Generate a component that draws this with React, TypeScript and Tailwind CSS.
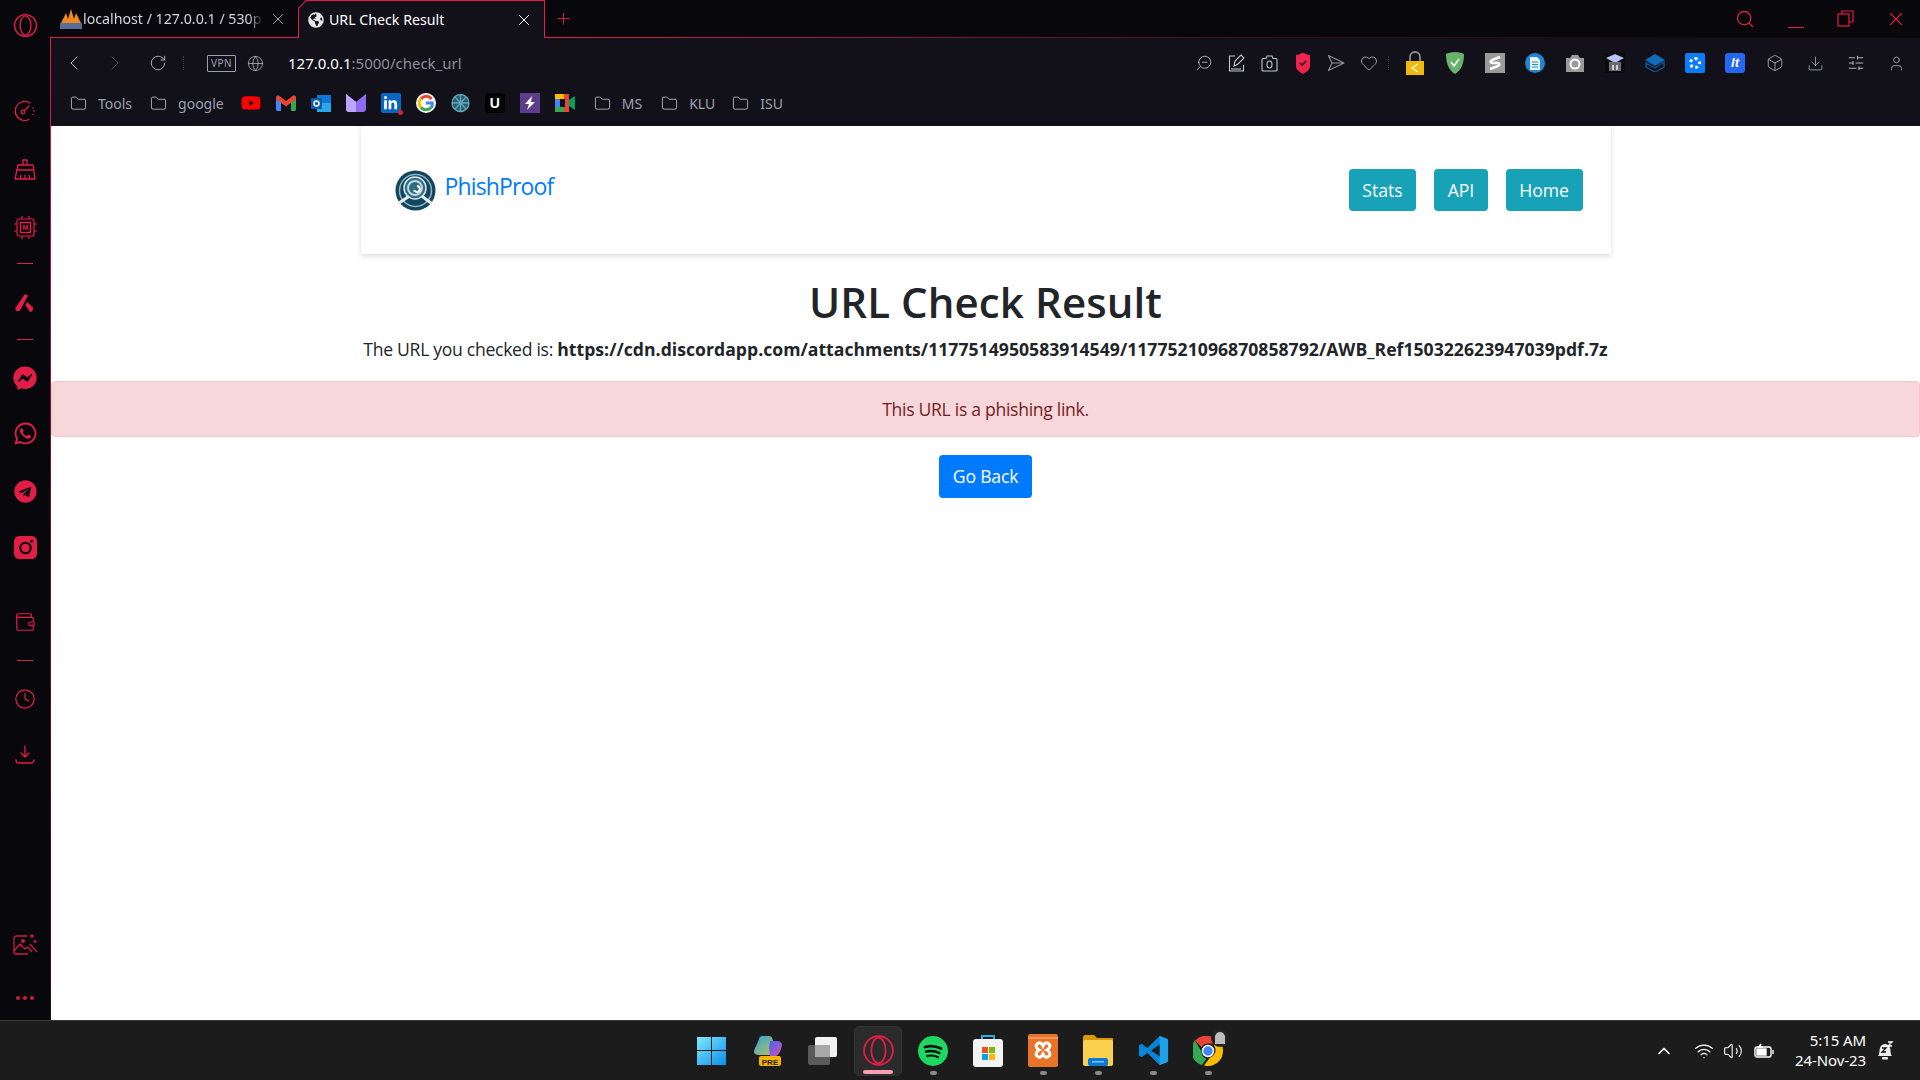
import React from "react";
import { ChevronLeft, ChevronRight, RotateCw, Globe, ZoomOut, Heart, Box, Download, SlidersHorizontal, User, Folder, Search, X, Plus, Clock, Wallet, ChevronUp, Wifi, Volume2 } from "lucide-react";
import { FaFacebookMessenger, FaWhatsapp, FaTelegram, FaYoutube, FaLinkedinIn, FaGlobeAmericas } from "react-icons/fa";

const Sep = () => <div className="w-[16px] h-px bg-[#e11d48]" />;

function Opera({ s = 24, c = "#e11d48" }: { s?: number; c?: string }) {
  return (
    <svg width={s} height={s} viewBox="0 0 24 24" fill="none" stroke={c} strokeWidth="1.3">
      <circle cx="12" cy="12" r="10.5" />
      <ellipse cx="12" cy="12" rx="5.2" ry="9.3" />
    </svg>
  );
}

function Sidebar() {
  const red = "#e11d48";
  return (
    <div className="w-[50px] shrink-0 flex flex-col items-center bg-[#08070c] text-[#e11d48]">
      <div className="mt-[13px]"><Opera s={25} /></div>
      <div className="mt-[62px]">
        <svg width="22" height="22" viewBox="0 0 22 22" fill="none" stroke={red} strokeWidth="1.3" strokeLinecap="round">
          <path d="M15 19.500A9.500 9.500 0 1 1 16 3" />
          <path d="M19 8v.01M20 11v.01M19 14.500v.01" strokeWidth="1.600" />
          <circle cx="9" cy="12" r="1.800" />
          <path d="M10.500 10.500L15 6" />
        </svg>
      </div>
      <div className="mt-[36px]">
        <svg width="22" height="22" viewBox="0 0 22 22" fill="none" stroke={red} strokeWidth="1.3" strokeLinejoin="round">
          <path d="M9 7V2h4v5" />
          <path d="M4 7h15l2 14H1z" />
          <path d="M2.500 12h17.500M6 21l1-4M11 21v-4M16 21l-1-4" />
        </svg>
      </div>
      <div className="mt-[35px]">
        <svg width="25" height="25" viewBox="0 0 25 25" fill="none" stroke={red} strokeWidth="1.200">
          <rect x="4" y="4" width="17" height="17" rx="2" />
          <rect x="7.500" y="7.500" width="10" height="10" strokeWidth="1.400" />
          <path d="M9 1v3M16 1v3M9 21v3M16 21v3M1 9h3M1 16h3M21 9h3M21 16h3" />
          <text x="12.500" y="15" fontSize="7" fontWeight="700" textAnchor="middle" fill={red} stroke="none" fontFamily="Liberation Sans">M</text>
        </svg>
      </div>
      <div className="mt-[23px]"><Sep /></div>
      <div className="mt-[30px]">
        <svg width="20" height="18" viewBox="0 0 20 18" fill={red}>
          <path d="M10 0l3 1.500-8 15-3 1-2-3z" />
          <path d="M12 8l6.500 6-1.500 3.500-2 .5-4.500-6.500z" />
        </svg>
      </div>
      <div className="mt-[27px]"><Sep /></div>
      <div className="mt-[26px]"><FaFacebookMessenger size={24} /></div>
      <div className="mt-[31px]"><FaWhatsapp size={25} /></div>
      <div className="mt-[34px]"><FaTelegram size={23} /></div>
      <div className="mt-[33px]">
        <svg width="23" height="23" viewBox="0 0 22 22">
          <rect width="22" height="22" rx="5" fill={red} />
          <circle cx="11" cy="11.500" r="5" fill="none" stroke="#08070c" strokeWidth="2" />
          <circle cx="17" cy="5" r="1.400" fill="#08070c" />
        </svg>
      </div>
      <div className="mt-[52px]"><Wallet size={22} strokeWidth={1.3} /></div>
      <div className="mt-[27px]"><Sep /></div>
      <div className="mt-[27px]"><Clock size={22} strokeWidth={1.3} /></div>
      <div className="mt-[34px]">
        <svg width="22" height="22" viewBox="0 0 22 22" fill="none" stroke={red} strokeWidth="1.300" strokeLinecap="round" strokeLinejoin="round">
          <path d="M11 2v11M7 9l4 4 4-4M2 16c0 2 1 3 3 3h12c2 0 3-1 3-3" />
        </svg>
      </div>
      <div className="mt-auto mb-[20px] flex flex-col items-center gap-[40px] opacity-90">
        <svg width="25" height="23" viewBox="0 0 25 23" fill="none" stroke={red} strokeWidth="1.300" strokeLinejoin="round">
          <path d="M14 3H3c-1 0-2 1-2 2v14c0 1 1 2 2 2h12" />
          <path d="M1 18l6-7 5 5 3-2 4 5" />
          <circle cx="10" cy="8" r="1.300" fill={red} />
          <path d="M17 11l7 8M19 1v4M17 3h4M22 7v3M20.500 8.500h3" />
        </svg>
        <div className="flex gap-[3px]">
          <div className="w-[4px] h-[4px] rounded-full bg-[#e11d48]" />
          <div className="w-[4px] h-[4px] rounded-full bg-[#e11d48]" />
          <div className="w-[4px] h-[4px] rounded-full bg-[#e11d48]" />
        </div>
      </div>
    </div>
  );
}

function Tabs() {
  return (
    <div className="h-[38px] flex text-[14.2px] text-[#d6d6dc]">
      <div className="w-[247px] flex items-center pl-[8px] border-b border-[#e11d48] pt-[1px]">
        <svg width="24" height="22" viewBox="0 0 24 22" className="shrink-0">
          <path d="M2 15L7 5l2 6 3-10 3 10 2-6 5 10z" fill="#f08a1c" />
          <rect x="1" y="15" width="22" height="6" fill="#5a6b9a" />
        </svg>
        <span className="w-[180px] overflow-hidden whitespace-nowrap [mask-image:linear-gradient(90deg,black_92%,transparent)]">localhost / 127.0.0.1 / 530p</span>
        <X size={18} strokeWidth={1.1} className="ml-[6px] text-[#c8c8cc]" />
      </div>
      <div className="w-[247px] flex items-center pl-[9px] border-x border-t border-[#e11d48] bg-[#12111a] [clip-path:polygon(8px_0,100%_0,100%_100%,0_100%,0_8px)] text-white relative pt-[1px]">
        <FaGlobeAmericas size={16} color="#e6e6e6" className="shrink-0" />
        <span className="ml-[5px] w-[186px]">URL Check Result</span>
        <X size={18} strokeWidth={1.3} className="text-white" />
        <svg width="9" height="9" viewBox="0 0 9 9" className="absolute left-[-1px] top-[-1px]"><path d="M0 8.500L8.500 0" stroke="#e11d48" strokeWidth="1.400" /></svg>
      </div>
      <div className="flex-1 flex items-start bg-[#08070c]">
        <div className="w-full h-full flex flex-col">
          <div className="flex-1 flex justify-between items-center pl-[9px] pr-[13px]">
            <Plus size={19} strokeWidth={1.2} className="text-[#e11d48]" />
            <div className="flex items-center text-[#e11d48]">
              <Search size={20} strokeWidth={1.6} />
              <div className="ml-[33px] w-[16px] h-[8px] border-b border-[#e11d48] mt-[10px]" />
              <svg width="17" height="17" viewBox="0 0 17 17" fill="none" stroke="#e11d48" strokeWidth="1.200" className="ml-[33px]">
                <rect x="1" y="4" width="11" height="12" />
                <path d="M5 4V1h11v11h-4" />
              </svg>
              <X size={22} strokeWidth={1.2} className="ml-[31px]" />
            </div>
          </div>
          <div className="h-px bg-gradient-to-r from-[#e11d48] via-[#3a1020] to-[#08070c]" />
        </div>
      </div>
    </div>
  );
}

function BookmarkFolder({ name, gap = "ml-[17px]" }: { name: string; gap?: string }) {
  return (
    <div className={`flex items-center ${gap}`}>
      <Folder size={17} strokeWidth={1.1} className="text-[#cfd0d6]" />
      <span className="ml-[11px] text-[14px] text-[#9ea0ae]">{name}</span>
    </div>
  );
}

function BookmarkIcons() {
  return (
    <div className="flex items-center gap-[15px] ml-[17px]">
      <FaYoutube size={20} color="#ff0000" />
      <svg width="20" height="16" viewBox="0 0 20 16">
        <path d="M0 3l5 1v12H1.500C.6 16 0 15.400 0 14.500z" fill="#4285f4" />
        <path d="M20 3l-5 1v12h3.500c.9 0 1.500-.6 1.500-1.500z" fill="#34a853" />
        <path d="M0 2.500C0 .5 2 0 3.500 1L10 6l6.500-5C18 0 20 .5 20 2.500V4l-10 7.500L0 4z" fill="#ea4335" />
      </svg>
      <svg width="20" height="20" viewBox="0 0 20 20">
        <rect x="6" y="2" width="14" height="16" fill="#0f78d4" />
        <rect x="6" y="10" width="14" height="9" fill="#28a8ea" />
        <rect x="0" y="5" width="11" height="11" fill="#0a5ca8" />
        <circle cx="5.500" cy="10.500" r="2.500" fill="none" stroke="#fff" strokeWidth="1.500" />
      </svg>
      <svg width="20" height="18" viewBox="0 0 20 18">
        <path d="M0 0l10 8 10-8v15c0 1.500-1 3-3 3H3c-2 0-3-1.500-3-3z" fill="#8b6cf0" />
        <path d="M0 0l10 8v10H3c-2 0-3-1.500-3-3z" fill="#b9a6ff" />
      </svg>
      <div className="relative w-[20px] h-[20px] bg-[#0a66c2] rounded-[2px] flex items-center justify-center text-white">
        <FaLinkedinIn size={15} />
        <div className="absolute right-[-2px] bottom-[-2px] w-[5px] h-[5px] rounded-full bg-[#d9232e]" />
      </div>
      <div className="w-[20px] h-[20px] rounded-full bg-white flex items-center justify-center">
        <svg width="16" height="16" viewBox="0 0 16 16" fill="none" strokeWidth="3">
          <path d="M13.500 4A6.500 6.500 0 0 0 3 4" stroke="#ea4335" />
          <path d="M3 3.500a6.500 6.500 0 0 0 0 9" stroke="#fbbc05" />
          <path d="M3 12.500a6.500 6.500 0 0 0 10 0" stroke="#34a853" />
          <path d="M13 12.500c1-1 1.500-3 1.300-4.500H8" stroke="#4285f4" />
        </svg>
      </div>
      <svg width="19" height="20" viewBox="0 0 19 20" fill="none" stroke="#5fa6bd" strokeWidth="1.300">
        <circle cx="9.500" cy="10" r="8.500" fill="#2b5d70" />
        <path d="M1 10h17M9.500 2v16M4 4l11 12M15 4L4 16" />
      </svg>
      <div className="w-[20px] h-[20px] bg-black rounded-[4px] flex items-center justify-center text-white font-bold text-[14px] [font-family:'Liberation_Sans',sans-serif]">U</div>
      <div className="w-[20px] h-[20px] bg-[#5b3d8a] flex items-center justify-center">
        <svg width="10" height="14" viewBox="0 0 10 14" fill="#fff"><path d="M7 0L0 8h4l-2 6 8-8H6z" /></svg>
      </div>
      <svg width="20" height="18" viewBox="0 0 20 18">
        <rect x="0" y="0" width="14" height="5" fill="#fbbc05" />
        <rect x="0" y="5" width="5" height="9" fill="#4285f4" />
        <rect x="0" y="13" width="14" height="5" fill="#34a853" />
        <rect x="9" y="0" width="5" height="18" fill="#ea4335" />
        <rect x="5" y="5" width="5" height="8" fill="#111" />
        <path d="M14 6l6-4v14l-6-4z" fill="#00a35a" />
      </svg>
    </div>
  );
}

function Ext({ children }: { children: React.ReactNode }) {
  return <div className="w-[20px] h-[24px] flex items-center justify-center">{children}</div>;
}

function Cell({ children }: { children: React.ReactNode }) {
  return <div className="w-[33px] flex items-center justify-center">{children}</div>;
}

function ToolbarRight() {
  const ic = { size: 18, strokeWidth: 1.1, className: "text-[#c4c5cc]" };
  return (
    <div className="flex items-center ml-auto pr-[15px]">
      <div className="flex items-center">
        <Cell><ZoomOut {...ic} className="text-[#c4c5cc] -scale-x-100" /></Cell>
        <Cell>
          <svg width="18" height="20" viewBox="0 0 18 20" fill="none" stroke="#c4c5cc" strokeWidth="1.100">
            <path d="M7 3H1.500v15h14v-6M6 13l1-5 6-6 3 3-6 6z" />
            <path d="M3 16h10" />
          </svg>
        </Cell>
        <Cell>
          <svg width="17" height="17" viewBox="0 0 17 17" fill="none" stroke="#c4c5cc" strokeWidth="1.100">
            <path d="M1 4.500c0-.6.400-1 1-1h3L6 1h5l1 2.500h3c.6 0 1 .4 1 1V15c0 .6-.4 1-1 1H2c-.6 0-1-.4-1-1z" />
            <ellipse cx="8.500" cy="9.500" rx="2.500" ry="3.500" />
          </svg>
        </Cell>
        <Cell>
          <svg width="16" height="23" viewBox="0 0 16 23">
            <path d="M1 3c3 0 5-2 7-2s4 2 7 2v11c0 4-4 6-7 8-3-2-7-4-7-8z" fill="#f0234f" />
            <path d="M5 11l2 2 4-4" stroke="#111" strokeWidth="1.300" fill="none" />
          </svg>
        </Cell>
        <Cell>
          <svg width="18" height="18" viewBox="0 0 18 18" fill="none" stroke="#8d8e99" strokeWidth="1.100" strokeLinejoin="round">
            <path d="M1.500 1.500L17 9 1.500 16.500 5 9zM5 9h12" />
          </svg>
        </Cell>
        <Cell><Heart size={18} strokeWidth={1.1} className="text-[#b4b5bd]" /></Cell>
      </div>
      <div className="w-px h-[14px] ml-[3px] mr-[16px] border-l border-dotted border-[#3a3a48]" />
      <div className="flex items-center gap-[20px]">
        <Ext>
          <svg width="18" height="24" viewBox="0 0 18 24" fill="none">
            <path d="M4 11V6a5 5 0 0 1 10 0v5" stroke="#8b8b8b" strokeWidth="1.800" />
            <rect x="0" y="10" width="18" height="14" fill="#f2b90c" />
            <path d="M12 13l-6 4 6 4" stroke="#fff" strokeWidth="1.200" />
          </svg>
        </Ext>
        <Ext>
          <svg width="20" height="24" viewBox="0 0 20 24">
            <path d="M10 1c4 0 7 1 9 2 0 8-2 16-9 20C3 19 1 11 1 3c2-1 5-2 9-2z" fill="#68b36b" />
            <path d="M6 11l3 4 5-7" stroke="#fff" strokeWidth="1.500" fill="none" />
          </svg>
        </Ext>
        <Ext>
          <div className="w-[20px] h-[20px] bg-[#9a9a9a] flex items-center justify-center">
            <svg width="12" height="16" viewBox="0 0 12 16" fill="none" stroke="#fff" strokeWidth="2.500"><path d="M11 2L3 5c-2 1-2 3 1 3h4c3 0 3 2 1 3l-8 3" /></svg>
          </div>
        </Ext>
        <Ext>
          <div className="w-[20px] h-[20px] rounded-full bg-[#1f87d6] flex items-center justify-center">
            <svg width="10" height="13" viewBox="0 0 10 13"><path d="M0 0h7l3 3v10H0z" fill="#e6f3ff" /><path d="M2 5h6M2 7.500h6M2 10h6" stroke="#1f87d6" /></svg>
          </div>
        </Ext>
        <Ext>
          <svg width="20" height="18" viewBox="0 0 20 18"><path d="M1 4h4l2-3h6l2 3h4v14H1z" fill="#9a9a9a" /><circle cx="10" cy="10" r="4.500" fill="none" stroke="#fff" strokeWidth="2" /></svg>
        </Ext>
        <Ext>
          <svg width="20" height="20" viewBox="0 0 20 20">
            <rect width="20" height="20" fill="#0a0a0a" />
            <path d="M10 1L19 5l-9 5-9-5z" fill="#b7c3f5" />
            <path d="M4 9h12v9H4z" fill="#6a6a70" />
            <path d="M7 12h2v5H7zM11 12h2v5h-2z" fill="#cfcfd3" />
          </svg>
        </Ext>
        <Ext>
          <svg width="20" height="18" viewBox="0 0 20 18">
            <path d="M10 0l10 6-10 6L0 6z" fill="#0f6cb8" />
            <path d="M1 9v4l9 5 9-5V8l-9 6z" fill="none" stroke="#0c5590" strokeWidth="1.400" />
          </svg>
        </Ext>
        <Ext>
          <div className="w-[20px] h-[20px] rounded-[2px] bg-[#0a7cff] flex items-center justify-center">
            <div className="w-[12px] h-[12px] rounded-full border-[3px] border-dotted border-white" />
          </div>
        </Ext>
        <Ext>
          <div className="w-[20px] h-[20px] rounded-[3px] bg-[#2468f2] flex items-center justify-center text-white text-[13px] font-bold italic [font-family:'Liberation_Sans',sans-serif]">lt</div>
        </Ext>
      </div>
      <div className="flex items-center gap-[23px] ml-[21px]">
        <Box size={18} strokeWidth={1.1} className="text-[#b4b5bd]" />
        <Download size={17} strokeWidth={1.1} className="text-[#b4b5bd]" />
        <SlidersHorizontal size={18} strokeWidth={1.1} className="text-[#d4d5da]" />
        <User size={17} strokeWidth={1.3} className="text-[#a3a4ac]" />
      </div>
    </div>
  );
}

function Toolbar() {
  return (
    <div className="h-[88px] bg-[#12111a] flex flex-col [font-family:'Noto_Sans',sans-serif]">
      <div className="h-[50px] flex items-center pl-[11px]">
        <ChevronLeft size={24} strokeWidth={1} className="text-[#b8b9c2]" />
        <ChevronRight size={24} strokeWidth={1} className="text-[#4b4c58] ml-[17px]" />
        <RotateCw size={18} strokeWidth={1.1} className="text-[#c4c5cc] ml-[22px]" />
        <div className="h-[14px] ml-[16px] border-l border-dotted border-[#3a3a48]" />
        <div className="ml-[23px] w-[29px] h-[17px] border border-[#9ea0ae] rounded-[1px] flex items-center justify-center text-[10px] tracking-[0.5px] text-[#9ea0ae] leading-none">VPN</div>
        <Globe size={17} strokeWidth={1} className="text-[#c4c5cc] ml-[11px]" />
        <div className="ml-[24px] text-[15px] text-[#8e8f9c]"><span className="text-white">127.0.0.1</span>:5000/check_url</div>
        <ToolbarRight />
      </div>
      <div className="flex-1 flex items-start pl-[19px] pt-[3px]">
        <div className="flex items-center h-[24px]">
          <BookmarkFolder name="Tools" gap="ml-0" />
          <BookmarkFolder name="google" gap="ml-[18px]" />
          <BookmarkIcons />
          <BookmarkFolder name="MS" gap="ml-[19px]" />
          <BookmarkFolder name="KLU" gap="ml-[19px]" />
          <BookmarkFolder name="ISU" gap="ml-[17px]" />
        </div>
      </div>
    </div>
  );
}

function Logo() {
  return (
    <svg width="41" height="41" viewBox="0 0 41 41" fill="none">
      <circle cx="20.500" cy="20.500" r="20" fill="#12465f" />
      <circle cx="20.500" cy="20.500" r="16" fill="none" stroke="#8fb6c4" strokeWidth="1.500" />
      <circle cx="20" cy="18" r="11" fill="#2e6e85" stroke="#d9e4e6" strokeWidth="1.500" />
      <circle cx="20" cy="18" r="7" fill="none" stroke="#c7d8dc" strokeWidth="2" />
      <path d="M22 16a3 3 0 1 1-3 4" stroke="#fff" strokeWidth="2" />
      <path d="M4 33l9-6M28 27l8 6" stroke="#e6eef0" strokeWidth="3" strokeLinecap="round" />
    </svg>
  );
}

function Content() {
  const btn = "h-[42px] px-[13.5px] rounded-[4px] bg-[#17a2b8] text-white text-[17.6px] flex items-center";
  return (
    <div className="flex-1 bg-white flex flex-col items-center text-[#212529] text-[17.6px] [font-family:'Open_Sans',sans-serif]">
      <div className="w-[1250px] h-[128px] shrink-0 bg-white shadow-[0_2px_5px_rgba(40,40,80,0.16)] flex items-center pl-[34px] pr-[28px]">
        <Logo />
        <span className="ml-[9px] mb-[8px] text-[23px] font-medium text-[#007bff] tracking-[-0.85px]">PhishProof</span>
        <div className="ml-auto flex gap-[18px]">
          <div className={btn}>Stats</div>
          <div className={btn}>API</div>
          <div className={btn}>Home</div>
        </div>
      </div>
      <h1 className="mt-[18px] h-[60px] leading-[60px] text-[42px] font-semibold tracking-[0.1px]">URL Check Result</h1>
      <p className="mt-[4px] h-[26px] leading-[26px] whitespace-nowrap tracking-[-0.3px] text-[17.6px]">
        The URL you checked is: <b className="font-bold tracking-[0.03px]">https://cdn.discordapp.com/attachments/1177514950583914549/1177521096870858792/AWB_Ref150322623947039pdf.7z</b>
      </p>
      <div className="mt-[19px] w-full h-[56px] shrink-0 bg-[#f8d7da] border border-[#f5c6cb] rounded-[4px] flex items-center justify-center text-[#721c24] tracking-[-0.3px]">
        This URL is a phishing link.
      </div>
      <div className="mt-[18px] h-[43px] w-[93px] rounded-[4px] bg-[#007bff] text-white flex items-center justify-center tracking-[-0.2px]">Go Back</div>
    </div>
  );
}

function TaskIcon({ children, dot, active }: { children: React.ReactNode; dot?: boolean; active?: boolean }) {
  return (
    <div className={`relative w-[48px] h-[50px] rounded-[5px] flex items-center justify-center ${active ? "bg-[#2b2b2b] border border-[#333]" : ""}`}>
      {children}
      {dot && <div className="absolute bottom-[1px] w-[7px] h-[4px] rounded-full bg-[#8a8a8a]" />}
      {active && <div className="absolute bottom-[1px] w-[30px] h-[4px] rounded-full bg-[#f7a0b2]" />}
    </div>
  );
}

function Taskbar() {
  return (
    <div className="h-[60px] shrink-0 bg-[#1c1c1c] border-t border-[#3a3a3a] flex items-center text-white [font-family:'Noto_Sans',sans-serif]">
      <div className="w-[687px] shrink-0" />
      <div className="flex items-center gap-[7px]">
        <TaskIcon>
          <svg width="29" height="29" viewBox="0 0 29 29">
            <defs><linearGradient id="w" x1="0" y1="0" x2="1" y2="1"><stop offset="0" stopColor="#7fe8ff" /><stop offset="1" stopColor="#0a8fe8" /></linearGradient></defs>
            <path d="M0 1h14v13H0zM15 1h14v13H15zM0 15h14v14H0zM15 15h14v14H15z" fill="url(#w)" />
          </svg>
        </TaskIcon>
        <div className="ml-[2px]">
          <TaskIcon>
            <svg width="30" height="32" viewBox="0 0 30 32">
              <defs>
                <linearGradient id="c1" x1="0" y1="0" x2="1" y2="1"><stop offset="0" stopColor="#2aa4e0" /><stop offset="1" stopColor="#c8c24a" /></linearGradient>
                <linearGradient id="c2" x1="0" y1="0" x2="1" y2="1"><stop offset="0" stopColor="#3a66e8" /><stop offset="1" stopColor="#e04fb4" /></linearGradient>
              </defs>
              <path d="M9 1h7c2 0 3 1 3.500 3L24 20H6c-3 0-5-1-5-3 0-3 4-9 5-13 .5-2 1.500-3 3-3z" fill="url(#c1)" />
              <path d="M17 6h8c2 0 4 2 4 4-.5 4-3 10-6 11H17l-1-8z" fill="url(#c2)" />
              <rect x="6" y="21" width="22" height="10" rx="2" fill="#f7b500" />
              <text x="17" y="29.500" fontSize="8" fontWeight="700" textAnchor="middle" fill="#222" fontFamily="Liberation Sans">PRE</text>
            </svg>
          </TaskIcon>
        </div>
        <TaskIcon>
          <svg width="30" height="30" viewBox="0 0 30 30">
            <rect x="0" y="9" width="22" height="20" rx="2" fill="#5a5a5a" />
            <rect x="7" y="1" width="22" height="20" rx="2" fill="#f2f2f2" />
            <rect x="7" y="9" width="15" height="12" fill="#a8a8a8" />
          </svg>
        </TaskIcon>
        <TaskIcon active>
          <Opera s={33} />
        </TaskIcon>
        <TaskIcon dot>
          <svg width="30" height="30" viewBox="0 0 30 30" fill="none" stroke="#111" strokeLinecap="round">
            <circle cx="15" cy="15" r="15" fill="#1ed760" stroke="none" />
            <path d="M7 11c5-1.500 11-1 16 1.500" strokeWidth="2.800" />
            <path d="M8 15.500c5-1 9-.8 13.500 1.500" strokeWidth="2.300" />
            <path d="M9 20c4-.8 8-.5 11 1.200" strokeWidth="1.900" />
          </svg>
        </TaskIcon>
        <TaskIcon>
          <svg width="30" height="33" viewBox="0 0 30 33">
            <path d="M9 6V2h12v4" fill="none" stroke="#2aa8e8" strokeWidth="2" />
            <rect x="0" y="5" width="30" height="28" rx="3" fill="#f3f3f3" />
            <rect x="9" y="13" width="6" height="6" fill="#f25022" />
            <rect x="16" y="13" width="6" height="6" fill="#7fba00" />
            <rect x="9" y="20" width="6" height="6" fill="#00a4ef" />
            <rect x="16" y="20" width="6" height="6" fill="#ffb900" />
          </svg>
        </TaskIcon>
        <TaskIcon dot>
          <svg width="30" height="33" viewBox="0 0 30 33">
            <rect width="30" height="33" rx="2" fill="#e8742a" />
            <path d="M9 10c3-3 5 0 6 2 1-2 3-5 6-2 2 2 0 5-2 6 2 1 4 4 2 6-3 3-5 0-6-2-1 2-3 5-6 2-2-2 0-5 2-6-2-1-4-4-2-6z" fill="none" stroke="#fff" strokeWidth="3" />
            <path d="M0 4h30" stroke="#f5b58a" strokeWidth="1" />
          </svg>
        </TaskIcon>
        <TaskIcon dot>
          <svg width="30" height="31" viewBox="0 0 30 31">
            <path d="M0 2c0-1 1-2 2-2h9l3 3h15c.6 0 1 .4 1 1v5H0z" fill="#d99a08" />
            <rect x="0" y="5" width="30" height="26" rx="2" fill="#fbd04e" />
            <rect x="5" y="23" width="20" height="8" rx="2" fill="#0f78d4" />
            <rect x="9" y="26" width="12" height="1.500" fill="#7cc4f4" />
          </svg>
        </TaskIcon>
        <TaskIcon dot>
          <svg width="31" height="31" viewBox="0 0 100 100">
            <path d="M70 3L30 42 12 28 3 33v34l9 5 18-14 40 39 27-11V14z" fill="#0a84d6" />
            <path d="M72 30L42 50l30 20z" fill="#1c1c1c" />
            <path d="M70 3l27 11v72L70 97z" fill="#1fa0ea" />
          </svg>
        </TaskIcon>
        <TaskIcon dot>
          <div className="relative">
            <svg width="30" height="30" viewBox="0 0 30 30">
              <path d="M15 0a15 15 0 0 1 13 7.500H15a7.500 7.500 0 0 0-6.500 3.800L2 4.500A15 15 0 0 1 15 0z" fill="#ea4335" />
              <path d="M2 4.500l6.500 11.300a7.500 7.500 0 0 0 5 7L9 29A15 15 0 0 1 2 4.500z" fill="#34a853" />
              <path d="M28 7.500A15 15 0 0 1 11 29.500l6-8a7.500 7.500 0 0 0 4.500-11l-1-3z" fill="#fbbc05" />
              <circle cx="15" cy="15" r="5.500" fill="#4285f4" stroke="#fff" strokeWidth="1.500" />
            </svg>
            <div className="absolute top-[-7px] right-[-6px] w-[18px] h-[18px] rounded-full bg-[#222] flex items-center justify-center">
              <div className="w-[10px] h-[12px] rounded-t-full bg-[#bdbdbd]" />
            </div>
          </div>
        </TaskIcon>
      </div>
      <div className="ml-auto flex items-center pr-[26px]">
        <ChevronUp size={20} strokeWidth={2} />
        <Wifi size={20} strokeWidth={1.5} className="ml-[20px]" />
        <Volume2 size={20} strokeWidth={1.3} className="ml-[9px]" />
        <svg width="20" height="16" viewBox="0 0 20 16" fill="none" stroke="#fff" strokeWidth="1.400" className="ml-[11px]">
          <rect x="1" y="4" width="16" height="10" rx="2" />
          <rect x="3" y="6" width="9" height="6" fill="#fff" />
          <path d="M19 7v4M4 5l3-4-1 3h3" />
        </svg>
        <div className="ml-[12px] mb-[2px] w-[80px] text-right text-[15px] leading-[20px] tracking-[-0.1px] whitespace-nowrap">
          <div>5:15 AM</div>
          <div>24-Nov-23</div>
        </div>
        <svg width="18" height="20" viewBox="0 0 18 20" className="ml-[10px]">
          <path d="M2 15c2-2 1-5 2-8s3-4 5-4 4 1 5 4 0 6 2 8z" fill="#eee" />
          <rect x="6" y="16" width="6" height="2.500" rx="1" fill="#eee" />
          <path d="M6 7h4l-4 4h4" stroke="#111" strokeWidth="1.300" fill="none" />
          <path d="M12 1h4l-4 4h4" stroke="#fff" strokeWidth="1.300" fill="none" />
        </svg>
      </div>
    </div>
  );
}

export default function App() {
  return (
    <div className="w-[1920px] h-[1080px] flex flex-col overflow-hidden bg-[#08070c] [font-family:'Noto_Sans',sans-serif]">
      <div className="flex-1 flex min-h-0">
        <Sidebar />
        <div className="flex-1 flex flex-col min-w-0 border-l [border-image:linear-gradient(#08070c_38px,#e11d48_38px,#8a1230_400px,#3a0a18)_1]">
          <Tabs />
          <Toolbar />
          <Content />
        </div>
      </div>
      <Taskbar />
    </div>
  );
}
